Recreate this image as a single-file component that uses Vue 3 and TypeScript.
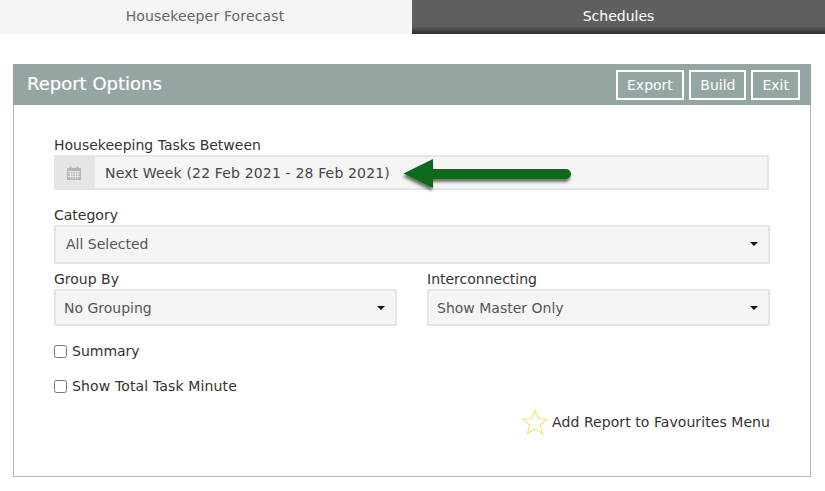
<script setup lang="ts">
const tabs = [
  { label: 'Housekeeper Forecast', active: true },
  { label: 'Schedules', active: false },
]
const actions = ['Export', 'Build', 'Exit']
</script>

<template>
  <div class="page">
    <nav class="tabs">
      <div v-for="t in tabs" :key="t.label" class="tab" :class="{ active: t.active }">{{ t.label }}</div>
    </nav>

    <section class="panel">
      <header class="panel-head">
        <h1>Report Options</h1>
        <div class="actions">
          <button v-for="a in actions" :key="a" type="button">{{ a }}</button>
        </div>
      </header>

      <div class="panel-body">
        <div class="field date-field">
          <label>Housekeeping Tasks Between</label>
          <div class="date-input">
            <span class="addon">
              <svg width="14" height="14" viewBox="0 0 14 14">
                <path fill="#b4b4b4" d="M0 2h2.5V0.5h2V2h5V0.5h2V2H14v12H0z" />
                <path stroke="#e6e6e6" stroke-width="1" fill="none" d="M1 5.5h12M1 8h12M1 10.500h12M3.500 5v8M6 5v8M8.500 5v8M11 5v8" />
              </svg>
            </span>
            <span class="date-value">Next Week (22 Feb 2021 - 28 Feb 2021)</span>
            <svg class="arrow" width="178" height="44" viewBox="0 0 178 44">
              <defs>
                <filter id="arrowShadow" x="-10%" y="-30%" width="120%" height="170%">
                  <feDropShadow dx="-1" dy="3" stdDeviation="1.800" flood-color="#000" flood-opacity="0.55" />
                </filter>
              </defs>
              <path fill="#0e6b1a" filter="url(#arrowShadow)" d="M3.500 22.500 L33 8 V18 H166 a5 5 0 0 1 0 10 H33 V37 Z" />
            </svg>
          </div>
        </div>

        <div class="field category">
          <label>Category</label>
          <div class="select tall"><span class="inset">All Selected</span><i class="caret"></i></div>
        </div>

        <div class="row">
          <div class="field">
            <label>Group By</label>
            <div class="select"><span>No Grouping</span><i class="caret"></i></div>
          </div>
          <div class="field">
            <label>Interconnecting</label>
            <div class="select"><span>Show Master Only</span><i class="caret"></i></div>
          </div>
        </div>

        <label class="check first"><input type="checkbox" /> <span>Summary</span></label>
        <label class="check second"><input type="checkbox" /> <span class="wide">Show Total Task Minute</span></label>

        <div class="favourite">
          <svg width="26" height="26" viewBox="0 0 26 26">
            <path fill="#fff" stroke="#fbdf6c" stroke-width="1.100" stroke-linejoin="miter"
              d="M13 1.500 L16.300 9.800 L25 10.300 L18.300 16 L20.500 24.500 L13 19.800 L5.500 24.500 L7.700 16 L1 10.300 L9.700 9.800 Z" />
          </svg>
          <span>Add Report to Favourites Menu</span>
        </div>
      </div>
    </section>
  </div>
</template>

<style>
html, body { margin: 0; background: #fff; }
</style>

<style scoped>
.page {
  width: 825px;
  height: 491px;
  overflow: hidden;
  font-family: "DejaVu Sans", Verdana, sans-serif;
  font-size: 14px;
  color: #333;
  box-sizing: border-box;
}
.tabs { display: grid; grid-template-columns: 412px 413px; height: 34px; }
.tab {
  display: flex;
  align-items: center;
  justify-content: center;
  padding-bottom: 3px;
  box-sizing: border-box;
  font-size: 14px;
  color: #fff;
  background: linear-gradient(#5f5f5f 0, #5f5f5f 26px, #322e2e 34px);
}
.tab.active { background: #f5f5f5; color: #666; letter-spacing: 0.15px; padding-right: 2px; }
.panel {
  margin: 30px 14px 0 13px;
  height: 413px;
  box-sizing: border-box;
  border: 1px solid #adbbba;
  border-top: 0;
}
.panel-head {
  height: 41px;
  margin: 0 -1px;
  padding: 5px 11px 0 14px;
  background: #95a5a4;
  display: flex;
  justify-content: space-between;
  box-sizing: border-box;
}
.panel-head h1 {
  margin: 0;
  font-size: 18px;
  font-weight: 400;
  color: #fff;
  line-height: 30px;
  -webkit-text-stroke: 0.2px #fff;
}
.actions { display: flex; gap: 5px; height: 30px; margin-top: 1px; }
.actions button {
  font: inherit;
  font-size: 14px;
  color: #fff;
  background: transparent;
  border: 2px solid #fff;
  padding: 0 9px;
  height: 30px;
  cursor: pointer;
}
.actions button:first-child { padding: 0 9.5px; }
.panel-body { padding: 30px 40px 0; }
.field label {
  display: block;
  line-height: 20px;
  color: #333;
}
.date-input {
  position: relative;
  display: flex;
  height: 35px;
  width: 715px;
  box-sizing: border-box;
  border: 2px solid #e6e6e6;
  background: #f5f5f5;
  color: #444;
}
.addon {
  width: 41px;
  margin: -2px 0 -2px -2px;
  padding-right: 2px;
  box-sizing: border-box;
  background: #e6e6e6;
  display: flex;
  align-items: center;
  justify-content: center;
  flex: none;
}
.date-value { padding-left: 10px; line-height: 33px; letter-spacing: 0.16px; }
.arrow { position: absolute; left: 344px; top: -6px; pointer-events: none; }
.category { margin-top: 15px; }
.select {
  display: flex;
  align-items: center;
  justify-content: space-between;
  height: 37px;
  box-sizing: border-box;
  border: 2px solid #e6e6e6;
  background: #f5f5f5;
  color: #555;
  padding: 0 10px 0 8px;
}
.select.tall { height: 39px; padding-bottom: 2px; }
.select .inset { padding-left: 2px; }
.caret {
  width: 0;
  height: 0;
  border-left: 4px solid transparent;
  border-right: 4px solid transparent;
  border-top: 4px solid #111;
}
.row {
  display: grid;
  grid-template-columns: 343px 343px;
  gap: 30px;
  margin-top: 5px;
}
.check {
  display: flex;
  align-items: center;
  gap: 5px;
  line-height: 20px;
  color: #333;
}
.check input {
  width: 13px;
  height: 13px;
  margin: 0;
}
.check .wide { letter-spacing: 0.14px; }
.check.first { margin-top: 15px; }
.check.second { margin-top: 15px; }
.favourite {
  display: flex;
  justify-content: flex-end;
  align-items: center;
  gap: 4px;
  margin-top: 13px;
  color: #333;
  letter-spacing: 0.07px;
}
</style>
